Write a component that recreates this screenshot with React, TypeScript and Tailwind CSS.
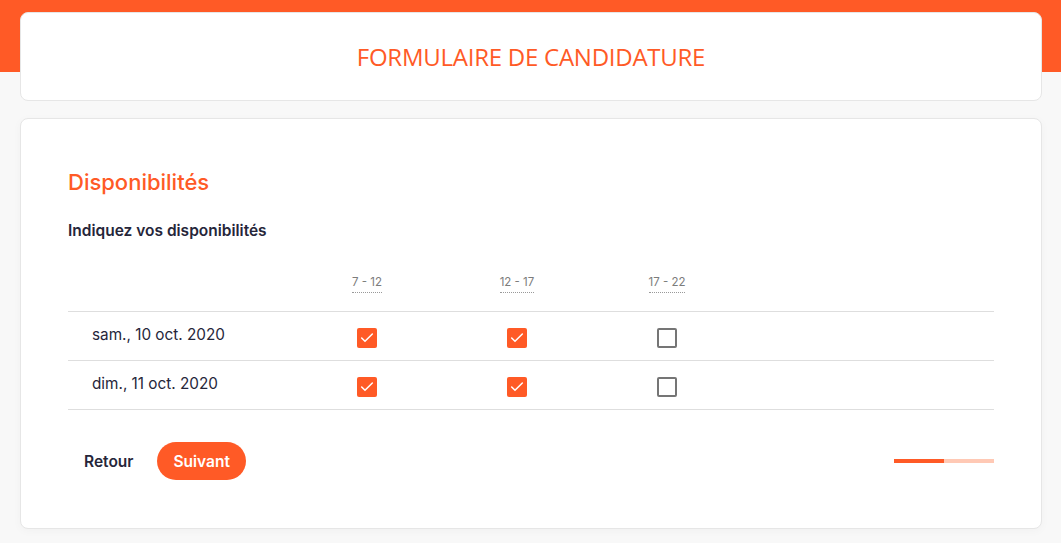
import { Check } from 'lucide-react';

export default function App() {
  const slots = ['7 - 12', '12 - 17', '17 - 22'];
  const days = [
    { label: 'sam., 10 oct. 2020', values: [true, true, false] },
    { label: 'dim., 11 oct. 2020', values: [true, true, false] },
  ];

  return (
    <main className="relative min-h-screen bg-[#f8f8f8] font-['Inter',sans-serif]">
      <div className="absolute top-0 left-0 right-0 h-[72px] bg-[#ff5a26]" />
      <div className="relative pl-5 pr-[19px] pt-3 pb-4 flex flex-col gap-[17px]">
        <header className="h-[89px] bg-white rounded-lg border border-[#e6e6e6] flex items-center justify-center">
          <h1 className="font-['Open_Sans',sans-serif] text-[24px] text-[#ff5a26] tracking-[-0.25px]">FORMULAIRE DE CANDIDATURE</h1>
        </header>

        <section className="h-[411px] bg-white rounded-lg border border-[#e6e6e6] px-[47px] pt-[49px] shadow-[0_2px_10px_rgba(0,0,0,0.03)]">
          <h2 className="text-[22px] font-medium text-[#ff5a26] leading-7">Disponibilités</h2>
          <p className="mt-[23px] text-[15.5px] font-semibold text-[#26263a]">Indiquez vos disponibilités</p>

          <div className="mt-[12px]">
            <div className="flex h-[58px] items-start pt-[20px] border-b border-[#dedede]">
              <div className="w-[224px]" />
              {slots.map((s) => (
                <div key={s} className="w-[150px] flex justify-center">
                  <span className="text-[11.5px] text-[#7c7c7c] leading-4 pb-[2px] border-b border-dotted border-[#999]">{s}</span>
                </div>
              ))}
            </div>
            {days.map((d) => (
              <div key={d.label} className="flex h-[49px] items-center border-b border-[#dedede]">
                <div className="w-[224px] pl-6 text-[15.3px] text-[#26263a] -mt-[1px]">{d.label}</div>
                {d.values.map((v, i) => (
                  <div key={i} className="w-[150px] flex justify-center pt-[4px]">
                    {v ? (
                      <span className="w-5 h-5 rounded-[2px] bg-[#ff5a26] flex items-center justify-center">
                        <Check size={16} strokeWidth={2.25} className="text-white" />
                      </span>
                    ) : (
                      <span className="w-5 h-5 rounded-[2px] border-2 border-[#757575]" />
                    )}
                  </div>
                ))}
              </div>
            ))}
          </div>

          <div className="mt-8 flex items-center">
            <button className="px-4 h-[38px] text-[15.5px] font-semibold text-[#26263a]">Retour</button>
            <button className="ml-2 px-4 h-[38px] rounded-full bg-[#ff5a26] text-[15.5px] font-semibold text-white">Suivant</button>
            <div className="ml-auto flex h-1 w-[100px]">
              <div className="w-1/2 bg-[#ff5a26]" />
              <div className="w-1/2 bg-[#ffc9b5]" />
            </div>
          </div>
        </section>
      </div>
    </main>
  );
}
